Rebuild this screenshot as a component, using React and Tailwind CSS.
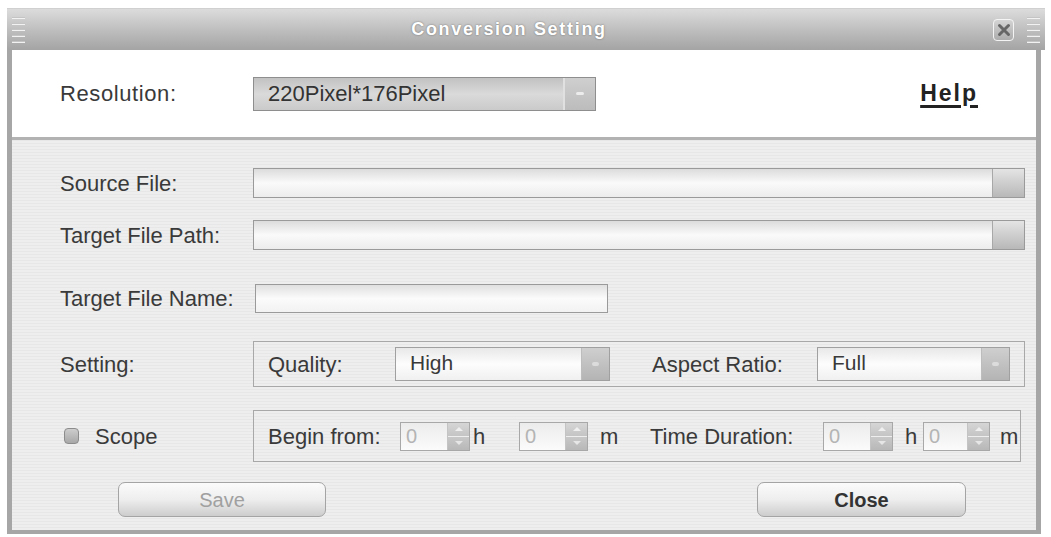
import React from 'react'

const font = { fontFamily: '"Liberation Sans", Arial, sans-serif' }

const Grip = () => (
    <div className="flex flex-col gap-[4px] w-[13px]">
        {[0, 1, 2, 3, 4].map(i => (
            <div key={i} className="h-[2px] bg-[#c4c4c4] border-b border-[#f2f2f2]"></div>
        ))}
    </div>
)

const BrowseInput = ({ className }) => (
    <div className={`flex h-[30px] border border-[#9a9a9a] bg-gradient-to-b from-[#dcdcdc] via-[#fafafa] to-[#ececec] ${className}`}>
        <div className="flex-1"></div>
        <div className="w-[32px] border-l border-[#a8a8a8] bg-gradient-to-b from-[#e4e4e4] to-[#b8b8b8]"></div>
    </div>
)

const Combo = ({ value, width }) => (
    <div className={`flex h-[34px] border border-[#a0a0a0] bg-gradient-to-b from-[#e8e8e8] via-[#fdfdfd] to-[#f0f0f0] ${width}`}>
        <div className="flex-1 pl-[14px] text-[21px] leading-[30px] text-[#3a3a3a]">{value}</div>
        <div className="w-[28px] flex items-center justify-center bg-gradient-to-b from-[#cfcfcf] to-[#b4b4b4] border-l border-[#bdbdbd]">
            <div className="w-[7px] h-[4px] rounded-full bg-[#dcdcdc]"></div>
        </div>
    </div>
)

const Spinner = ({ width }) => (
    <div className={`flex h-[29px] border border-[#a8a8a8] bg-gradient-to-b from-[#ececec] to-[#fbfbfb] ${width}`}>
        <div className="flex-1 pl-[5px] text-[20px] leading-[27px] text-[#b4b4b4]">0</div>
        <div className="w-[22px] flex flex-col border-l border-[#c4c4c4]">
            <div className="flex-1 flex items-center justify-center bg-gradient-to-b from-[#d6d6d6] to-[#c4c4c4] border-b border-[#eeeeee]">
                <div className="w-0 h-0 border-x-[4px] border-x-transparent border-b-[4px] border-b-[#efefef]"></div>
            </div>
            <div className="flex-1 flex items-center justify-center bg-gradient-to-b from-[#c8c8c8] to-[#b8b8b8]">
                <div className="w-0 h-0 border-x-[4px] border-x-transparent border-t-[4px] border-t-[#e6e6e6]"></div>
            </div>
        </div>
    </div>
)

const Label = ({ children, className = '' }) => (
    <div className={`text-[22px] text-[#3a3a3a] whitespace-nowrap ${className}`}>{children}</div>
)

export default function App() {
    return (
        <div className="w-[1051px] h-[537px] bg-white pt-[8px] pl-[7px]" style={font}>
            <div className="w-[1038px] flex flex-col">
                {/* title bar */}
                <div className="h-[42px] flex items-center px-[5px] bg-gradient-to-b from-[#dcdcdc] via-[#bfbfbf] to-[#a4a4a4] border-t border-[#d0d0d0]">
                    <Grip />
                    <div className="flex-1 text-center text-white font-bold text-[18px] tracking-[1.7px] [text-shadow:0_0_2px_#6a6a6a]">
                        Conversion Setting
                    </div>
                    <div className="w-[21px] h-[22px] rounded-[4px] border border-[#f4f4f4] bg-gradient-to-b from-[#d4d4d4] to-[#acacac] flex items-center justify-center mr-[13px]">
                        <svg width="14" height="14" viewBox="0 0 14 14">
                            <path d="M2.5 2.5 L11.5 11.5 M11.5 2.5 L2.5 11.5" stroke="#666" strokeWidth="3" strokeLinecap="round" />
                        </svg>
                    </div>
                    <Grip />
                </div>

                {/* body */}
                <div className="border-x-[5px] border-b-[4px] border-[#a6a6a6] mr-[4px]">
                    <div className="h-[87px] bg-white flex items-center pl-[48px] pr-[58px]">
                        <Label className="w-[193px] tracking-[0.6px]">Resolution:</Label>
                        <div className="flex h-[34px] w-[343px] border border-[#8e8e8e] bg-gradient-to-b from-[#c2c2c2] via-[#dadada] to-[#cacaca]">
                            <div className="flex-1 pl-[14px] text-[22px] leading-[32px] text-[#333]">220Pixel*176Pixel</div>
                            <div className="w-[32px] border-l-[2px] border-[#e0e0e0] bg-gradient-to-b from-[#cfcfcf] to-[#bcbcbc] flex items-center justify-center">
                                <div className="w-[8px] h-[3px] rounded-full bg-[#ececec]"></div>
                            </div>
                        </div>
                        <div className="ml-auto text-[23px] font-bold text-[#222] underline underline-offset-[4px] decoration-[3px] tracking-[2px]">Help</div>
                    </div>
                    <div className="h-[3px] bg-[#b2b2b2]"></div>
                    <div className="h-[390px] flex flex-col pl-[48px] pr-[11px] pt-[28px] bg-[repeating-linear-gradient(0deg,#eeeeee_0px,#eeeeee_2px,#e7e7e7_2px,#e7e7e7_3px)]">
                        <div className="flex items-center h-[30px]">
                            <Label className="w-[193px]">Source File:</Label>
                            <BrowseInput className="flex-1" />
                        </div>
                        <div className="flex items-center h-[30px] mt-[22px]">
                            <Label className="w-[193px]">Target File Path:</Label>
                            <BrowseInput className="flex-1" />
                        </div>
                        <div className="flex items-center h-[29px] mt-[34px]">
                            <Label className="w-[195px]">Target File Name:</Label>
                            <div className="w-[353px] h-[29px] border border-[#9a9a9a] bg-gradient-to-b from-[#e0e0e0] via-[#fbfbfb] to-[#f2f2f2]"></div>
                        </div>
                        <div className="flex items-center h-[46px] mt-[28px]">
                            <Label className="w-[193px]">Setting:</Label>
                            <div className="flex-1 h-[46px] border border-[#a8a8a8] flex items-center pl-[14px]">
                                <Label className="w-[127px]">Quality:</Label>
                                <Combo value="High" width="w-[215px]" />
                                <Label className="w-[207px] pl-[42px]">Aspect Ratio:</Label>
                                <Combo value="Full" width="w-[193px]" />
                            </div>
                        </div>
                        <div className="flex items-center h-[52px] mt-[23px]">
                            <div className="w-[193px] flex items-center pl-[4px]">
                                <div className="w-[15px] h-[16px] rounded-[4px] border border-[#8c8c8c] bg-gradient-to-b from-[#cdcdcd] to-[#a8a8a8]"></div>
                                <Label className="ml-[16px]">Scope</Label>
                            </div>
                            <div className="w-[768px] h-[52px] border border-[#a8a8a8] flex items-center pl-[14px]">
                                <Label className="w-[132px]">Begin from:</Label>
                                <Spinner width="w-[70px]" />
                                <Label className="w-[49px] pl-[3px]">h</Label>
                                <Spinner width="w-[69px]" />
                                <Label className="w-[62px] pl-[12px]">m</Label>
                                <Label className="w-[173px]">Time Duration:</Label>
                                <Spinner width="w-[70px]" />
                                <Label className="w-[30px] pl-[12px]">h</Label>
                                <Spinner width="w-[67px]" />
                                <Label className="pl-[10px]">m</Label>
                            </div>
                        </div>
                        <div className="flex items-center h-[35px] mt-[20px] pl-[58px]">
                            <button className="w-[208px] h-[35px] rounded-[7px] border border-[#a4a4a4] bg-gradient-to-b from-[#fbfbfb] via-[#eeeeee] to-[#cdcdcd] text-[20px] text-[#a0a0a0]">
                                Save
                            </button>
                            <button className="ml-[431px] w-[209px] h-[35px] rounded-[7px] border border-[#a4a4a4] bg-gradient-to-b from-[#fbfbfb] via-[#eeeeee] to-[#cdcdcd] text-[20px] font-bold text-[#333]">
                                Close
                            </button>
                        </div>
                    </div>
                </div>
            </div>
        </div>
    )
}
